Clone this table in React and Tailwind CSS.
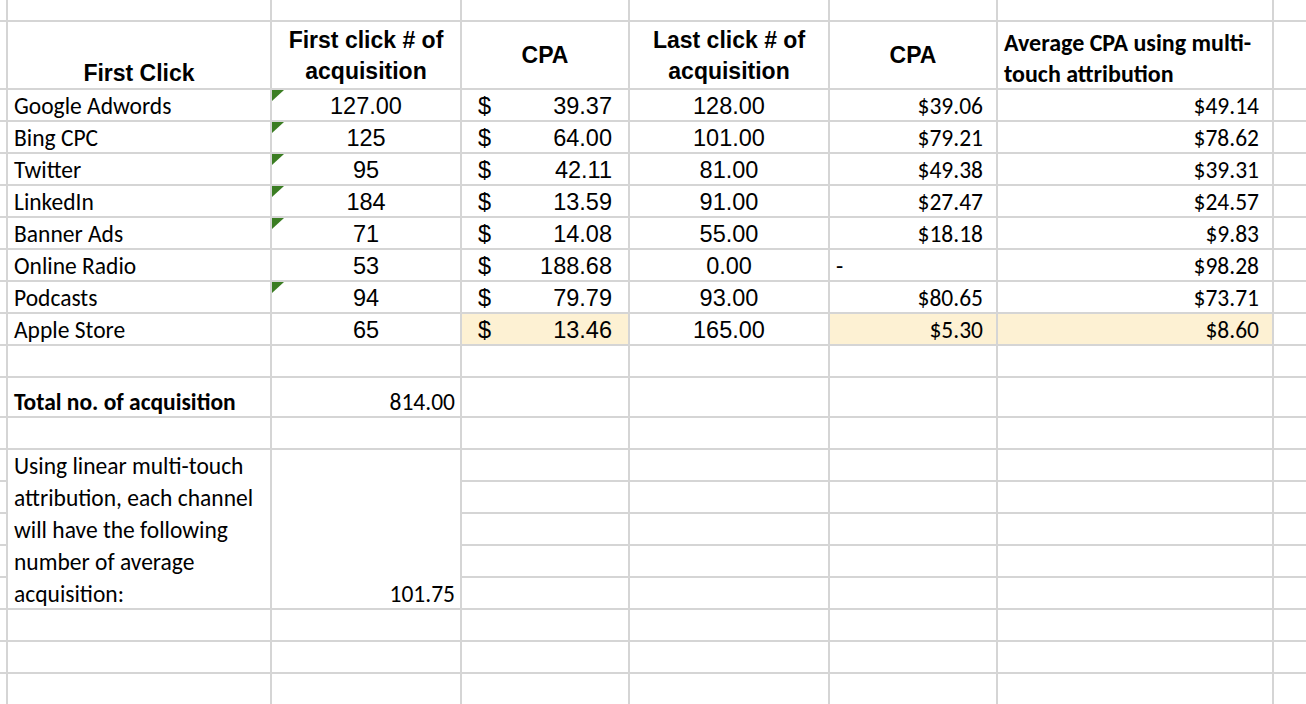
const arial = "font-['Liberation_Sans',Arial,sans-serif]";
const calibri = "font-['Carlito','Lato',sans-serif]";

const channels = [
  { name: 'Google Adwords', first: '127.00', flag: true, cpa: '39.37', last: '128.00', lastCpa: '$39.06', avg: '$49.14' },
  { name: 'Bing CPC', first: '125', flag: true, cpa: '64.00', last: '101.00', lastCpa: '$79.21', avg: '$78.62' },
  { name: 'Twitter', first: '95', flag: true, cpa: '42.11', last: '81.00', lastCpa: '$49.38', avg: '$39.31' },
  { name: 'LinkedIn', first: '184', flag: true, cpa: '13.59', last: '91.00', lastCpa: '$27.47', avg: '$24.57' },
  { name: 'Banner Ads', first: '71', flag: true, cpa: '14.08', last: '55.00', lastCpa: '$18.18', avg: '$9.83' },
  { name: 'Online Radio', first: '53', flag: false, cpa: '188.68', last: '0.00', lastCpa: '-', avg: '$98.28' },
  { name: 'Podcasts', first: '94', flag: true, cpa: '79.79', last: '93.00', lastCpa: '$80.65', avg: '$73.71' },
  { name: 'Apple Store', first: '65', flag: false, cpa: '13.46', last: '165.00', lastCpa: '$5.30', avg: '$8.60', hl: true },
];

const Cell = ({ className = '', hl = false, children }) => (
  <div className={`relative min-w-0 overflow-hidden whitespace-nowrap ${hl ? 'bg-[#fdf1d3]' : 'bg-white'} ${className}`}>
    {children}
  </div>
);

const Flag = () => (
  <svg className="absolute left-0 top-0" width="12" height="11" viewBox="0 0 12 11">
    <polygon points="0,0 12,0 0,11" fill="#3b7d23" />
  </svg>
);

const EmptyRow = () => (
  <>
    {Array.from({ length: 8 }).map((_, i) => (
      <Cell key={i} />
    ))}
  </>
);

export default function App() {
  return (
    <div className="w-[1306px] h-[704px] overflow-hidden bg-white text-black">
      <div className="grid gap-[2px] bg-[#d5d5d5] grid-cols-[6px_262px_188px_166px_198px_166px_274px_32px] grid-rows-[20px_66px_repeat(8,30px)_30px_38px_30px_repeat(5,30px)_30px_30px_30px]">
        {/* top partial row */}
        <EmptyRow />

        {/* header */}
        <Cell />
        <Cell className={`${arial} font-bold text-[23px] leading-[30px] flex items-end justify-center`}>First Click</Cell>
        <Cell className={`${arial} font-bold text-[23px] leading-[31px] flex items-center justify-center text-center pt-[1px]`}>
          First click # of<br />acquisition
        </Cell>
        <Cell className={`${arial} font-bold text-[23px] flex items-center justify-center`}>CPA</Cell>
        <Cell className={`${arial} font-bold text-[23px] leading-[31px] flex items-center justify-center text-center pt-[1px]`}>
          Last click # of<br />acquisition
        </Cell>
        <Cell className={`${arial} font-bold text-[23px] flex items-center justify-center`}>CPA</Cell>
        <Cell className={`${calibri} font-bold text-[24px] leading-[31px] flex items-start pl-[6px] pt-[5px]`}>
          <span>Average CPA using multi-<br />touch attribution</span>
        </Cell>
        <Cell />

        {/* data rows */}
        {channels.map((c) => (
          <div key={c.name} className="contents">
            <Cell />
            <Cell className={`${calibri} text-[23.5px] leading-[30px] flex items-center pl-[6px] pt-[1px]`}>{c.name}</Cell>
            <Cell className={`${arial} text-[23.5px] leading-[30px] flex items-center justify-center pt-[1px]`}>
              {c.flag && <Flag />}
              {c.first}
            </Cell>
            <Cell hl={c.hl} className={`${arial} text-[23.5px] leading-[30px] flex items-center justify-between px-[16px] pt-[1px]`}>
              <span>$</span>
              <span>{c.cpa}</span>
            </Cell>
            <Cell className={`${arial} text-[23.5px] leading-[30px] flex items-center justify-center pt-[1px]`}>{c.last}</Cell>
            <Cell
              hl={c.hl}
              className={`${calibri} text-[23.5px] leading-[30px] flex items-center pt-[1px] ${c.lastCpa === '-' ? 'justify-start pl-[6px]' : 'justify-end pr-[13px]'}`}
            >
              {c.lastCpa}
            </Cell>
            <Cell hl={c.hl} className={`${calibri} text-[23.5px] leading-[30px] flex items-center justify-end pr-[13px] pt-[1px]`}>
              {c.avg}
            </Cell>
            <Cell />
          </div>
        ))}

        <EmptyRow />

        {/* total */}
        <Cell />
        <Cell className={`${calibri} font-bold text-[23.5px] leading-[28px] flex items-end pl-[6px]`}>Total no. of acquisition</Cell>
        <Cell className={`${calibri} text-[23.5px] leading-[28px] flex items-end justify-end pr-[5px]`}>814.00</Cell>
        <Cell />
        <Cell />
        <Cell />
        <Cell />
        <Cell />

        <EmptyRow />

        {/* merged note block */}
        <Cell />
        <Cell className={`${calibri} text-[23.5px] leading-[32px] row-span-5 flex items-start pl-[6px]`}>
          <span>
            Using linear multi-touch
            <br />
            attribution, each channel
            <br />
            will have the following
            <br />
            number of average
            <br />
            acquisition:
          </span>
        </Cell>
        <Cell className={`${calibri} text-[23.5px] leading-[28px] row-span-5 flex items-end justify-end pr-[5px]`}>101.75</Cell>
        <Cell />
        <Cell />
        <Cell />
        <Cell />
        <Cell />
        {Array.from({ length: 4 }).map((_, r) => (
          <div key={r} className="contents">
            <Cell />
            <Cell />
            <Cell />
            <Cell />
            <Cell />
            <Cell />
          </div>
        ))}

        <EmptyRow />
        <EmptyRow />
        <EmptyRow />
      </div>
    </div>
  );
}
